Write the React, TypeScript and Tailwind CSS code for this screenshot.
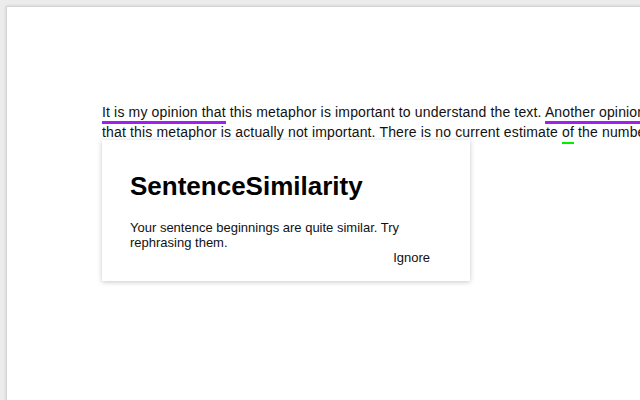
import React from "react";

export default function App() {
  return (
    <div
      className="relative h-[400px] w-[640px] overflow-hidden bg-[#ececec] pl-[6px] pt-[6px]"
      style={{ fontFamily: '"Liberation Sans", Arial, sans-serif' }}
    >
      <div className="relative h-[420px] w-[700px] border-l border-t border-[#d4d4d4] bg-white shadow-[0_0_3px_rgba(0,0,0,0.15)]">
        <p className="absolute left-[95px] top-[95px] whitespace-nowrap text-[14px] leading-[20px] tracking-[0.15px] text-[#111]">
          <span className="border-b-[3px] border-[#a020f0] pb-px">It is my opinion that</span> this metaphor is
          important to understand the text.{" "}
          <span className="border-b-[3px] border-[#a020f0] pb-px">Another opinion</span> is
          <br />
          that this metaphor is actually not important. There is no current estimate{" "}
          <span className="border-b-[2px] border-[#00ee00] pb-[2px]">of</span> the number of
        </p>

        <div className="absolute left-[95px] top-[133px] w-[368px] bg-white pb-[16px] pl-[28px] pr-[28px] pt-[31px] text-black shadow-[0_1px_5px_rgba(0,0,0,0.22)]">
          <h1 className="text-[26px] font-bold leading-[30px]">SentenceSimilarity</h1>
          <p className="mt-[19px] text-[13px] leading-[15px] text-[#111]">
            Your sentence beginnings are quite similar. Try rephrasing them.
          </p>
          <div className="pr-[12px] text-right text-[13px] leading-[15px] text-[#111]">Ignore</div>
        </div>
      </div>
    </div>
  );
}
